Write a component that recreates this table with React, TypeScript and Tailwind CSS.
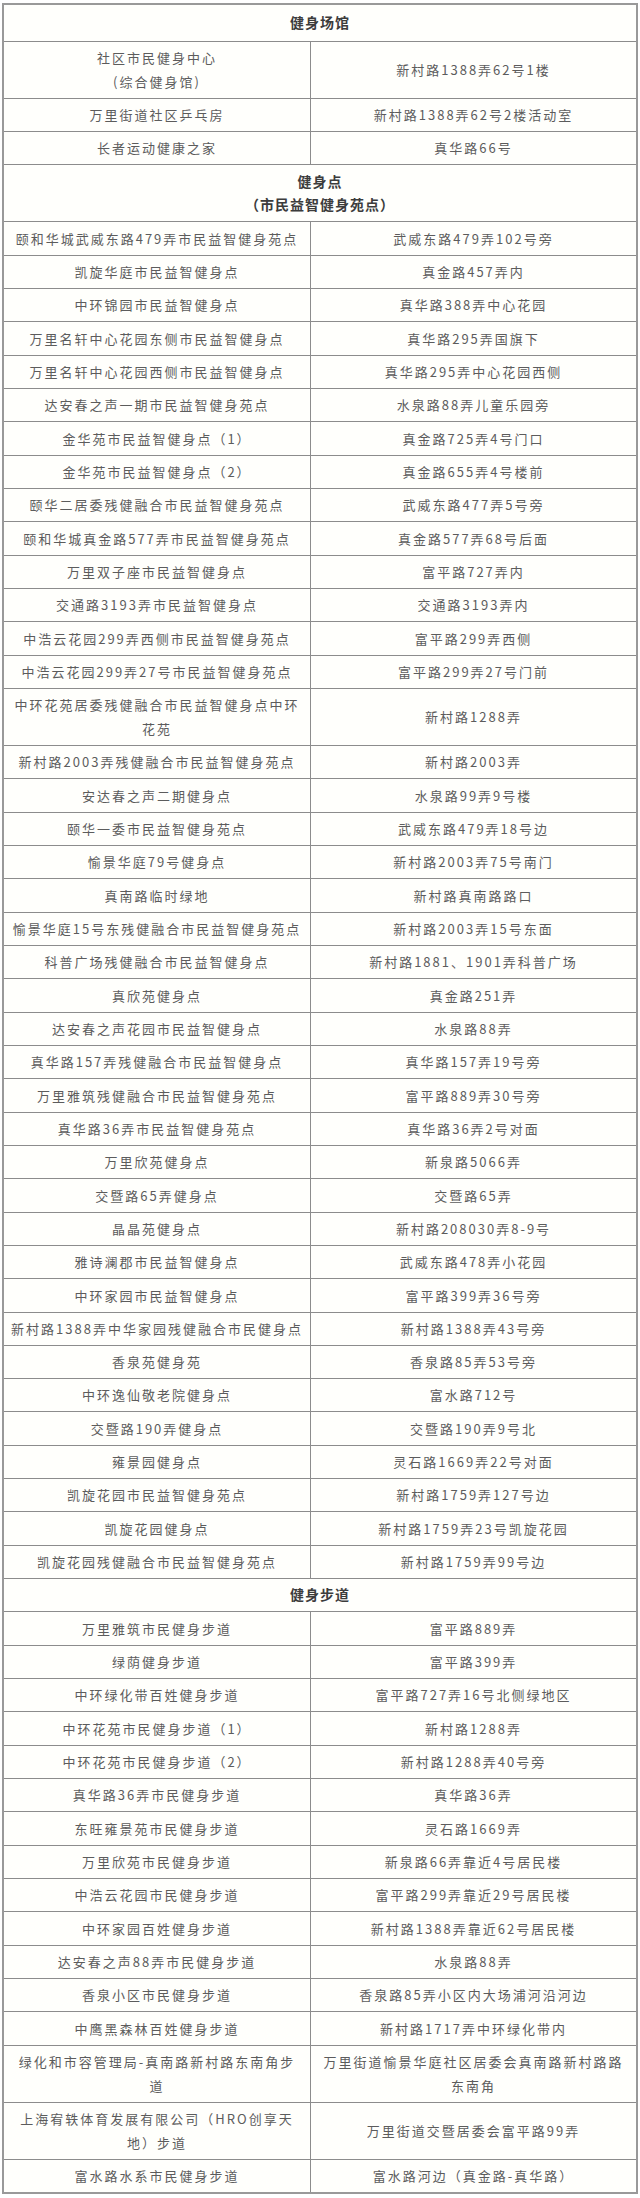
import React from "react";

type Row = { left: React.ReactNode; right: React.ReactNode; tall?: boolean };

const venues: Row[] = [
  {
    left: (
      <>
        社区市民健身中心
        <br />
        (综合健身馆)
      </>
    ),
    right: "新村路1388弄62号1楼",
    tall: true,
  },
  { left: "万里街道社区乒乓房", right: "新村路1388弄62号2楼活动室" },
  { left: "长者运动健康之家", right: "真华路66号" },
];

const points: Row[] = [
  { left: "颐和华城武威东路479弄市民益智健身苑点", right: "武威东路479弄102号旁" },
  { left: "凯旋华庭市民益智健身点", right: "真金路457弄内" },
  { left: "中环锦园市民益智健身点", right: "真华路388弄中心花园" },
  { left: "万里名轩中心花园东侧市民益智健身点", right: "真华路295弄国旗下" },
  { left: "万里名轩中心花园西侧市民益智健身点", right: "真华路295弄中心花园西侧" },
  { left: "达安春之声一期市民益智健身苑点", right: "水泉路88弄儿童乐园旁" },
  { left: "金华苑市民益智健身点（1）", right: "真金路725弄4号门口" },
  { left: "金华苑市民益智健身点（2）", right: "真金路655弄4号楼前" },
  { left: "颐华二居委残健融合市民益智健身苑点", right: "武威东路477弄5号旁" },
  { left: "颐和华城真金路577弄市民益智健身苑点", right: "真金路577弄68号后面" },
  { left: "万里双子座市民益智健身点", right: "富平路727弄内" },
  { left: "交通路3193弄市民益智健身点", right: "交通路3193弄内" },
  { left: "中浩云花园299弄西侧市民益智健身苑点", right: "富平路299弄西侧" },
  { left: "中浩云花园299弄27号市民益智健身苑点", right: "富平路299弄27号门前" },
  {
    left: (
      <>
        中环花苑居委残健融合市民益智健身点中环
        <br />
        花苑
      </>
    ),
    right: "新村路1288弄",
    tall: true,
  },
  { left: "新村路2003弄残健融合市民益智健身苑点", right: "新村路2003弄" },
  { left: "安达春之声二期健身点", right: "水泉路99弄9号楼" },
  { left: "颐华一委市民益智健身苑点", right: "武威东路479弄18号边" },
  { left: "愉景华庭79号健身点", right: "新村路2003弄75号南门" },
  { left: "真南路临时绿地", right: "新村路真南路路口" },
  { left: "愉景华庭15号东残健融合市民益智健身苑点", right: "新村路2003弄15号东面" },
  { left: "科普广场残健融合市民益智健身点", right: "新村路1881、1901弄科普广场" },
  { left: "真欣苑健身点", right: "真金路251弄" },
  { left: "达安春之声花园市民益智健身点", right: "水泉路88弄" },
  { left: "真华路157弄残健融合市民益智健身点", right: "真华路157弄19号旁" },
  { left: "万里雅筑残健融合市民益智健身苑点", right: "富平路889弄30号旁" },
  { left: "真华路36弄市民益智健身苑点", right: "真华路36弄2号对面" },
  { left: "万里欣苑健身点", right: "新泉路5066弄" },
  { left: "交暨路65弄健身点", right: "交暨路65弄" },
  { left: "晶晶苑健身点", right: "新村路208030弄8-9号" },
  { left: "雅诗澜郡市民益智健身点", right: "武威东路478弄小花园" },
  { left: "中环家园市民益智健身点", right: "富平路399弄36号旁" },
  { left: "新村路1388弄中华家园残健融合市民健身点", right: "新村路1388弄43号旁" },
  { left: "香泉苑健身苑", right: "香泉路85弄53号旁" },
  { left: "中环逸仙敬老院健身点", right: "富水路712号" },
  { left: "交暨路190弄健身点", right: "交暨路190弄9号北" },
  { left: "雍景园健身点", right: "灵石路1669弄22号对面" },
  { left: "凯旋花园市民益智健身苑点", right: "新村路1759弄127号边" },
  { left: "凯旋花园健身点", right: "新村路1759弄23号凯旋花园" },
  { left: "凯旋花园残健融合市民益智健身苑点", right: "新村路1759弄99号边" },
];

const trails: Row[] = [
  { left: "万里雅筑市民健身步道", right: "富平路889弄" },
  { left: "绿荫健身步道", right: "富平路399弄" },
  { left: "中环绿化带百姓健身步道", right: "富平路727弄16号北侧绿地区" },
  { left: "中环花苑市民健身步道（1）", right: "新村路1288弄" },
  { left: "中环花苑市民健身步道（2）", right: "新村路1288弄40号旁" },
  { left: "真华路36弄市民健身步道", right: "真华路36弄" },
  { left: "东旺雍景苑市民健身步道", right: "灵石路1669弄" },
  { left: "万里欣苑市民健身步道", right: "新泉路66弄靠近4号居民楼" },
  { left: "中浩云花园市民健身步道", right: "富平路299弄靠近29号居民楼" },
  { left: "中环家园百姓健身步道", right: "新村路1388弄靠近62号居民楼" },
  { left: "达安春之声88弄市民健身步道", right: "水泉路88弄" },
  { left: "香泉小区市民健身步道", right: "香泉路85弄小区内大场浦河沿河边" },
  { left: "中鹰黑森林百姓健身步道", right: "新村路1717弄中环绿化带内" },
  {
    left: (
      <>
        绿化和市容管理局-真南路新村路东南角步
        <br />
        道
      </>
    ),
    right: (
      <>
        万里街道愉景华庭社区居委会真南路新村路路
        <br />
        东南角
      </>
    ),
    tall: true,
  },
  {
    left: (
      <>
        上海宥轶体育发展有限公司（HRO创享天
        <br />
        地）步道
      </>
    ),
    right: "万里街道交暨居委会富平路99弄",
    tall: true,
  },
  { left: "富水路水系市民健身步道", right: "富水路河边（真金路-真华路）" },
];

function DataRow({ row }: { row: Row }) {
  return (
    <div className="flex border-t border-[#8c8c8c]">
      <div className="w-[307px] shrink-0 border-r border-[#8c8c8c] flex items-center justify-center text-center px-1 py-[4.33px] whitespace-nowrap">
        <span>{row.left}</span>
      </div>
      <div className="flex-1 flex items-center justify-center text-center px-1 py-[4.33px] whitespace-nowrap">
        <span>{row.right}</span>
      </div>
    </div>
  );
}

function SectionHeader({ children, first }: { children: React.ReactNode; first?: boolean }) {
  return (
    <div
      className={
        first
          ? "text-center font-bold text-[14px] tracking-[1px] text-[#3c3c3c] py-[6px]"
          : "text-center font-bold text-[14px] tracking-[1px] text-[#3c3c3c] border-t border-[#8c8c8c] py-[4.33px]"
      }
    >
      {children}
    </div>
  );
}

export default function App() {
  return (
    <div className="bg-white w-[640px] min-h-[2198px] pt-[3px] pl-[2px] font-['Noto_Sans_CJK_SC','Noto_Sans',sans-serif]">
      <div className="w-[636px] border-2 border-[#999999] bg-[#fffffc] text-[13px] leading-[23.67px] tracking-[2px] text-[#5c5c5c]">
        <SectionHeader first>健身场馆</SectionHeader>
        {venues.map((r, i) => (
          <DataRow key={"v" + i} row={r} />
        ))}
        <SectionHeader>
          健身点
          <br />
          （市民益智健身苑点）
        </SectionHeader>
        {points.map((r, i) => (
          <DataRow key={"p" + i} row={r} />
        ))}
        <SectionHeader>健身步道</SectionHeader>
        {trails.map((r, i) => (
          <DataRow key={"t" + i} row={r} />
        ))}
      </div>
    </div>
  );
}
